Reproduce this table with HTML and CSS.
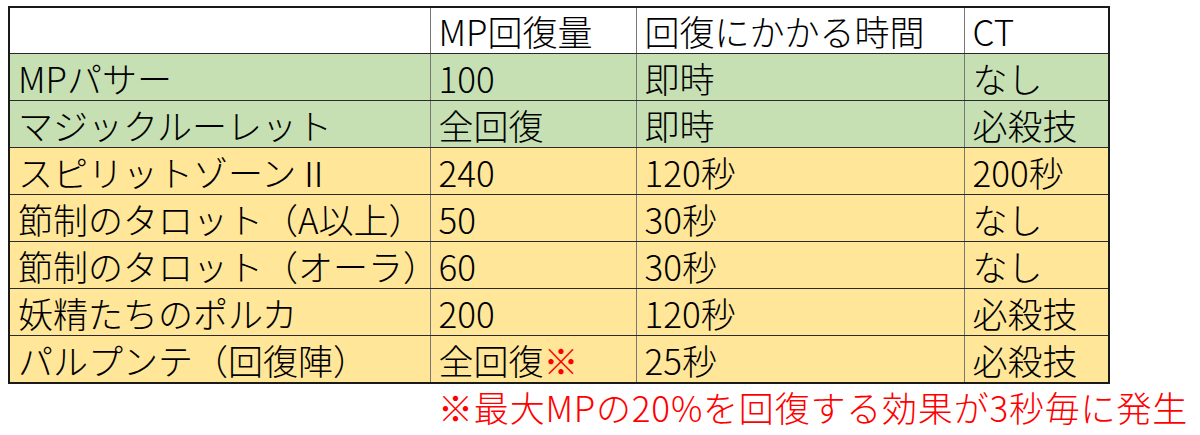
FILE: index.html
```html
<!DOCTYPE html>
<html lang="ja">
<head>
<meta charset="utf-8">
<link rel="stylesheet" href="styles.css">
</head>
<body>
<div class="page">
<table class="mp">
<colgroup>
<col class="c1"><col class="c2"><col class="c3"><col class="c4">
</colgroup>
<tr class="head"><td></td><td>MP回復量</td><td>回復にかかる時間</td><td>CT</td></tr>
<tr class="green"><td>MPパサー</td><td>100</td><td>即時</td><td>なし</td></tr>
<tr class="green"><td>マジックルーレット</td><td>全回復</td><td>即時</td><td>必殺技</td></tr>
<tr class="yellow"><td>スピリットゾーンⅡ</td><td>240</td><td>120秒</td><td>200秒</td></tr>
<tr class="yellow"><td>節制のタロット（A以上）</td><td>50</td><td>30秒</td><td>なし</td></tr>
<tr class="yellow"><td>節制のタロット（オーラ）</td><td>60</td><td>30秒</td><td>なし</td></tr>
<tr class="yellow"><td>妖精たちのポルカ</td><td>200</td><td>120秒</td><td>必殺技</td></tr>
<tr class="yellow"><td>パルプンテ（回復陣）</td><td>全回復<span class="red">※</span></td><td>25秒</td><td>必殺技</td></tr>
</table>
<p class="note">※最大MPの20%を回復する効果が3秒毎に発生</p>
</div>
</body>
</html>
```
FILE: styles.css
```css
html, body {
  margin: 0;
  padding: 0;
  background: #ffffff;
}
body {
  font-family: "Noto Sans CJK JP", "Noto Sans", sans-serif;
  font-weight: 300;
  color: #000;
}
.page {
  padding: 6px 0 0 8px;
}
.mp {
  border-collapse: collapse;
  table-layout: fixed;
  width: 1100px;
  border: 2px solid #1a1a1a;
}
.c1 { width: 421px; }
.c2 { width: 206px; }
.c3 { width: 328px; }
.c4 { width: 145px; }
.mp td {
  height: 46px;
  padding: 0 0 0 8px;
  font-size: 35px;
  line-height: 1;
  white-space: nowrap;
  border-top: 1px solid #2a2a2a;
  border-bottom: 1px solid #2a2a2a;
  border-left: 1px solid #777;
  border-right: 1px solid #777;
  vertical-align: middle;
}
.head td {
  background: #ffffff;
  height: 45px;
}
.green td { background: #c6e0b4; }
.yellow td { background: #ffe699; }
.red { color: #ff0000; }
.note {
  margin: 2px 0 0 0;
  width: 1180px;
  text-align: right;
  font-size: 35px;
  line-height: 42px;
  letter-spacing: 0.8px;
  color: #ff0000;
}
```
